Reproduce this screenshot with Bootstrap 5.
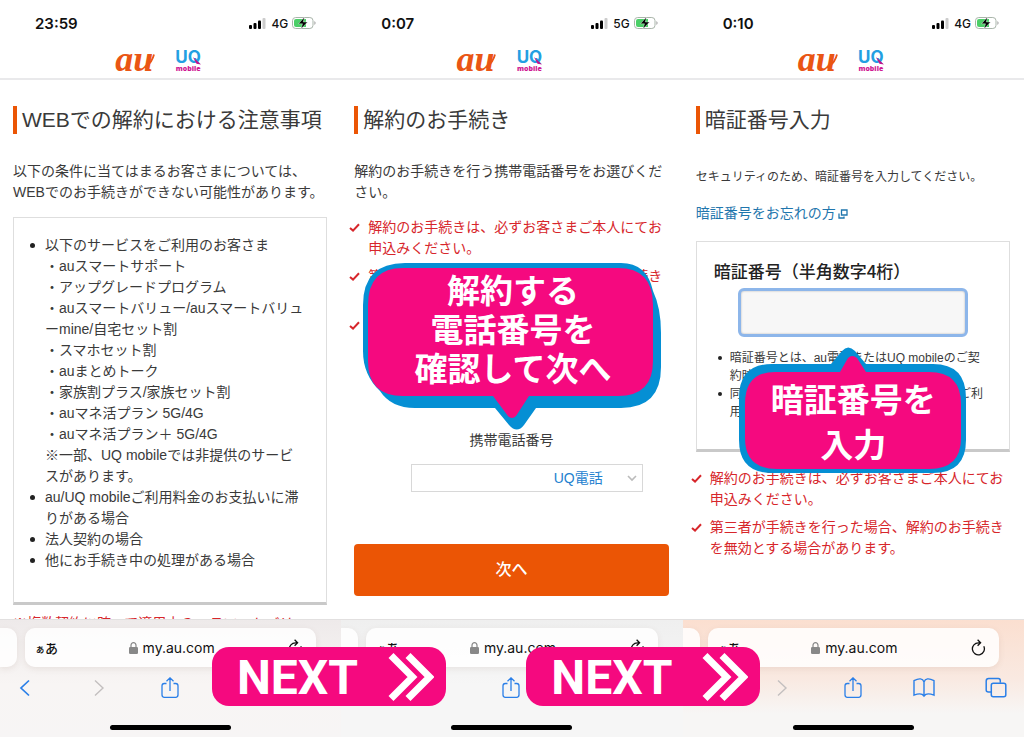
<!DOCTYPE html>
<html lang="ja">
<head>
<meta charset="utf-8">
<meta name="viewport" content="width=device-width, initial-scale=1">
<title>解約のお手続き</title>
<link href="https://cdn.jsdelivr.net/npm/bootstrap@5.3.0/dist/css/bootstrap.min.css" rel="stylesheet">
<style>
:root{--au:#eb5505;--pink:#f5097f;--sky:#058fd4;--alert:#d7262b;--ios:#2a7fe8}
body{font-family:"Liberation Sans","Noto Sans CJK JP",sans-serif;font-size:14px;line-height:21px;color:#3a3a3a;background:#fff}
p,ul,h1{margin:0}
.phone{overflow:hidden}
.status{height:46px;padding:0 25px 0 35px;font-family:Inter,sans-serif;color:#111}
.status time{font-size:15px;font-weight:600}
.status .short{padding-left:5px}
.status .net{font-size:12px;font-weight:500}
.brand{height:34px;padding:0 25px 2px 0;gap:20px;border-bottom:2px solid #e9e9eb}
.logo-au{position:relative;width:40px;height:28px;font:italic 700 36px/24px "Liberation Serif",serif;color:#ea5514}
.logo-au svg{position:absolute;right:0;top:6px}
.logo-uq{position:relative;width:26px;height:24px;font:700 17px/16px Inter,sans-serif;color:#239fe2;text-align:center}
.logo-uq svg{position:absolute;right:0;top:8px}
.logo-uq span{display:block;font:800 7px/7px "Open Sans",sans-serif;color:#cf1a93}
.view{flex:1 1 0;min-height:0;overflow:hidden;padding:26px 14px 0 13px}
.heading{border-left:4px solid var(--au);padding-left:5px;font-size:21px;line-height:28px;font-weight:400;color:#3a3a3a;white-space:nowrap}
.intro{margin-top:27px}
.panel{border:1px solid #dedede;border-bottom:3px solid #c9c9c9}
.panel ul{list-style:none;padding:0}
.panel li{position:relative}
.panel li::before{content:"";position:absolute;left:-15px;top:8px;width:5px;height:5px;border-radius:50%;background:#222}
.panel .small-text li::before{left:-12px;top:7px;width:4px;height:4px}
.conditions{margin-top:14px;padding:17px 21px 31px 31px;line-break:anywhere}
.alert-text{color:var(--alert)}
.checks{list-style:none;padding:0;margin-left:-5px}
.checks li{display:flex;gap:8px;margin-bottom:7px}
.checks svg{flex:none;margin-top:6px}
.checks .tall{height:108px}
.number-select{width:auto;margin:13px 26px 0 57px;height:28px;padding:0 39px 0 8px;border:1px solid #d8d8d8;border-radius:0;font-size:14px;line-height:21px;color:#2381cf;text-align-last:right;background-position:right 5px center;background-size:10px 10px;background-image:url("data:image/svg+xml,%3Csvg xmlns='http://www.w3.org/2000/svg' viewBox='0 0 10 10'%3E%3Cpath d='M1 3l4 4 4-4' fill='none' stroke='%23bbb' stroke-width='1.6'/%3E%3C/svg%3E")}
.go{height:52px;margin-top:52px;background:var(--au);border:0;border-radius:4px;color:#fff;font-size:16px;font-weight:500}
.go:hover{background:#d14b04;color:#fff}
.small-text{font-size:12px;line-height:18px}
.pin-panel{margin-top:17px;padding:15px 17px 28px}
.pin-panel label{display:block;font-family:"Noto Sans CJK JP",sans-serif;font-size:17px;line-height:27px;font-weight:500;color:#222}
.pin-input{height:49px;border:3px solid #8db6ea;border-radius:6px;background:#f7f7f7;box-shadow:inset 0 0 2px #aaa}
.pin-input:focus{border-color:#8db6ea;background:#f7f7f7}
.bubble{position:absolute;left:50%;transform:translateX(-50%);color:#fff;font-family:"Noto Sans CJK JP",sans-serif;font-weight:700;font-size:33px;text-align:center;white-space:nowrap}
.bubble svg{position:absolute;left:0;top:0}
.bubble p{position:relative}
.b-phone{top:263px;width:298px;height:168px;line-height:39px;padding:7px 0 0 2px}
.b-pin{top:346px;width:228px;height:128px;line-height:45px;padding-top:30px}
.safari{height:118px;border-top:1px solid #e2e0e0;padding-top:8px;background:linear-gradient(#eeeaea,#f8f5f4 55%,#f7f5f5)}
.safari.plain{background:linear-gradient(#efefef,#f6f6f6 55%,#f6f6f6)}
.safari.warm{background:linear-gradient(#fbdfd0,#f9e9e1 50%,#f7f6f5 80%)}
.pill{height:39px;border-radius:10px;background:rgba(255,255,255,.85);box-shadow:0 2px 6px rgba(120,80,60,.1)}
.pill.prev{width:17px;border-radius:0 10px 10px 0}
.pill.address{margin:0 25px 0 8px;padding:0 13px 0 10px;font-family:Inter,sans-serif;font-size:14px;color:#111}
.aa{font:500 10px "Noto Sans CJK JP",sans-serif}
.aa span{font-size:13px}
.site{gap:5px;padding-right:3px}
.tools{padding:0 17px 0 14px;margin-top:10px;height:22px}
.tools button,.pill button{border:0;padding:0;background:none;line-height:0;color:var(--ios)}
.tools button:disabled{color:#c3bfbf}
.pill button{color:#111}
.home{width:121px;height:5px;border-radius:3px;background:#000;margin:26px auto 0}
.next-tag{position:absolute;bottom:31px;width:234px;height:59px;border-radius:17px;background:var(--pink);color:#fff;font:700 48px/59px Roboto,sans-serif;padding:1px 12px 0 25px}
.after-first{left:20.7%}
.after-second{left:51.4%}
</style>
</head>
<body>
<svg width="0" height="0" class="position-absolute" aria-hidden="true">
  <symbol id="cell" viewBox="0 0 18 11"><rect y="7" width="3" height="4" rx="1"/><rect x="4.5" y="5" width="3" height="6" rx="1"/><rect x="9" y="2.500" width="3" height="8.500" rx="1"/><rect x="13.500" width="3" height="11" rx="1" fill="#ccc"/></symbol>
  <symbol id="battery" viewBox="0 0 24 14"><rect x=".5" y="1.500" width="20.500" height="11" rx="3.200" fill="#fff" stroke="#a9b5aa"/><path d="M4 3h10v8H4a2 2 0 0 1-2-2V5a2 2 0 0 1 2-2z" fill="#4bcf67"/><path d="M22.300 5v4q1.400-.8 1.400-2t-1.400-2z" fill="#aaa"/><path d="M12.500 1L6.500 7.800h4L9 13l6.500-7h-4.200z" stroke="#fff" stroke-width=".4"/></symbol>
  <symbol id="au-tail" viewBox="0 0 8 14"><path d="M0 12.500Q5 9 7 1.500" fill="none" stroke="#ea5514" stroke-width="1.800"/></symbol>
  <symbol id="uq-tail" viewBox="0 0 8 8"><path d="M0 0l8 7.500-4.500-.8z" fill="#c3128c"/></symbol>
  <symbol id="tick" viewBox="0 0 11 9"><path d="M1 5l3 2.600L10 1.200" fill="none" stroke="#d7262b" stroke-width="2"/></symbol>
  <symbol id="lock" viewBox="0 0 9 12"><rect y="5" width="9" height="7" rx="1.300"/><path d="M2 5.500V3.200a2.500 2.500 0 0 1 5 0v2.300" fill="none" stroke="currentColor" stroke-width="1.200"/></symbol>
  <symbol id="reload" viewBox="0 0 15 17"><path d="M12.800 7.200A6 6 0 1 1 7.500 3.800H9M6.600.8L9.600 3.800 6.600 6.800" fill="none" stroke="currentColor" stroke-width="1.300"/></symbol>
  <symbol id="back" viewBox="0 0 22 22"><path d="M15 3.500L7 11l8 7.500" fill="none" stroke="currentColor" stroke-width="1.700"/></symbol>
  <symbol id="fwd" viewBox="0 0 22 22"><path d="M9 3.500L17 11l-8 7.500" fill="none" stroke="currentColor" stroke-width="1.400"/></symbol>
  <symbol id="share" viewBox="0 0 22 22"><path d="M8.500 6.500H6.300Q4 6.500 4 8.800v9Q4 20.300 6.300 20.300h11.400q2.300 0 2.300-2.500v-9q0-2.300-2.300-2.300h-2.200M12 14V1M8.500 4.300L12 .9l3.500 3.400" fill="none" stroke="currentColor" stroke-width="1.300"/></symbol>
  <symbol id="book" viewBox="0 0 22 22"><path d="M11 5v14M11 5Q9-.5 1 3.600v14.600q7.500-3 10 .8 2.500-3.800 10-.8V3.600Q13-.5 11 5z" fill="none" stroke="currentColor" stroke-width="1.400"/></symbol>
  <symbol id="tabs" viewBox="0 0 22 22"><rect x="6.300" y="6.300" width="14.500" height="13.500" rx="2" fill="none" stroke="currentColor" stroke-width="1.500"/><path d="M6 15H3.500Q1.200 15 1.200 13V4q0-2.500 2.500-2.500h9.600q2 0 2 2.300v2" fill="none" stroke="currentColor" stroke-width="1.500"/></symbol>
  <symbol id="chev" viewBox="0 0 46 48"><path d="M3 2.500l21.500 21.500L3 45.500M20 2.500l21.500 21.500-21.500 21.500" fill="none" stroke="#fff" stroke-width="7"/></symbol>
</svg>

<div class="position-relative overflow-hidden">
<div class="row g-0 min-vh-100">

  <section class="phone col-4 d-flex flex-column min-vh-100 position-relative">
    <div class="status d-flex align-items-center justify-content-between"><time>23:59</time>
      <span class="d-flex align-items-center"><svg width="18" height="11"><use href="#cell"/></svg><span class="net mx-1">4G</span><svg width="24" height="14"><use href="#battery"/></svg></span></div>
    <header class="brand d-flex justify-content-center align-items-center"><span class="logo-au">au<svg width="8" height="14" aria-hidden="true"><use href="#au-tail"/></svg></span><span class="logo-uq">UQ<span>mobile</span><svg width="8" height="8" aria-hidden="true"><use href="#uq-tail"/></svg></span></header>
    <main class="view">
      <h1 class="heading">WEBでの解約における注意事項</h1>
      <p class="intro">以下の条件に当てはまるお客さまについては、<br>WEBでのお手続きができない可能性があります。</p>
      <div class="panel conditions">
        <ul>
          <li>以下のサービスをご利用のお客さま<br>・auスマートサポート<br>・アップグレードプログラム<br>・auスマートバリュー/auスマートバリューmine/自宅セット割<br>・スマホセット割<br>・auまとめトーク<br>・家族割プラス/家族セット割<br>・auマネ活プラン 5G/4G<br>・auマネ活プラン＋ 5G/4G<br>※一部、UQ mobileでは非提供のサービスがあります。</li>
          <li>au/UQ mobileご利用料金のお支払いに滞りがある場合</li>
          <li>法人契約の場合</li>
          <li>他にお手続き中の処理がある場合</li>
        </ul>
      </div>
      <p class="alert-text mt-2">※複数契約に跨って適用中のauスマートバリ</p>
    </main>
    <footer class="safari">
      <div class="d-flex"><div class="pill prev"></div>
        <div class="pill address flex-fill d-flex align-items-center justify-content-between"><span class="aa">ぁ<span>あ</span></span><span class="site d-flex align-items-center"><svg width="9" height="12" color="#888" fill="#888"><use href="#lock"/></svg>my.au.com</span><button type="button" aria-label="再読み込み"><svg width="15" height="17"><use href="#reload"/></svg></button></div></div>
      <div class="tools d-flex justify-content-between">
        <button type="button" aria-label="戻る"><svg width="22" height="22"><use href="#back"/></svg></button><button type="button" disabled aria-label="進む"><svg width="22" height="22"><use href="#fwd"/></svg></button><button type="button" aria-label="共有"><svg width="22" height="22"><use href="#share"/></svg></button><button type="button" aria-label="ブックマーク"><svg width="22" height="22"><use href="#book"/></svg></button><button type="button" aria-label="タブ"><svg width="22" height="22"><use href="#tabs"/></svg></button></div>
      <div class="home"></div>
    </footer>
  </section>

  <section class="phone col-4 d-flex flex-column min-vh-100 position-relative">
    <div class="status d-flex align-items-center justify-content-between"><time class="short">0:07</time>
      <span class="d-flex align-items-center"><svg width="18" height="11"><use href="#cell"/></svg><span class="net mx-1">5G</span><svg width="24" height="14"><use href="#battery"/></svg></span></div>
    <header class="brand d-flex justify-content-center align-items-center"><span class="logo-au">au<svg width="8" height="14" aria-hidden="true"><use href="#au-tail"/></svg></span><span class="logo-uq">UQ<span>mobile</span><svg width="8" height="8" aria-hidden="true"><use href="#uq-tail"/></svg></span></header>
    <main class="view">
      <h1 class="heading">解約のお手続き</h1>
      <p class="intro">解約のお手続きを行う携帯電話番号をお選びください。</p>
      <ul class="checks alert-text" style="margin-top:14px">
        <li><svg width="11" height="9"><use href="#tick"/></svg><span>解約のお手続きは、必ずお客さまご本人にてお申込みください。</span></li>
        <li><svg width="11" height="9"><use href="#tick"/></svg><span>第三者が手続きを行った場合、解約のお手続きを無効とする場合があります。</span></li>
        <li class="tall"><svg width="11" height="9"><use href="#tick"/></svg></li>
      </ul>
      <label for="tel" class="d-block text-center">携帯電話番号</label>
      <div class="d-grid"><select id="tel" class="form-select number-select"><option>UQ電話</option></select></div>
      <button type="button" class="btn go w-100">次へ</button>
    </main>
    <div class="bubble b-phone">
      <svg width="298" height="168" aria-hidden="true"><path d="M42 0H258Q284 0 290 28Q298 45 298 70V104Q298 145 258 145H173L161 162Q154 171 146 162L132 145H52Q28 145 17 128Q0 112 0 88V42Q0 0 42 0z" fill="#058fd4"/><path d="M40 5H255Q290 5 290 42V98Q290 133 255 133H166L153 153Q149 157 145 153L130 133H40Q5 133 5 98V42Q5 5 40 5z" fill="#f5097f"/></svg>
      <p>解約する<br>電話番号を<br>確認して次へ</p>
    </div>
    <footer class="safari plain">
      <div class="d-flex"><div class="pill prev"></div>
        <div class="pill address flex-fill d-flex align-items-center justify-content-between"><span class="aa">ぁ<span>あ</span></span><span class="site d-flex align-items-center"><svg width="9" height="12" color="#888" fill="#888"><use href="#lock"/></svg>my.au.com</span><button type="button" aria-label="再読み込み"><svg width="15" height="17"><use href="#reload"/></svg></button></div></div>
      <div class="tools d-flex justify-content-between">
        <button type="button" aria-label="戻る"><svg width="22" height="22"><use href="#back"/></svg></button><button type="button" disabled aria-label="進む"><svg width="22" height="22"><use href="#fwd"/></svg></button><button type="button" aria-label="共有"><svg width="22" height="22"><use href="#share"/></svg></button><button type="button" aria-label="ブックマーク"><svg width="22" height="22"><use href="#book"/></svg></button><button type="button" aria-label="タブ"><svg width="22" height="22"><use href="#tabs"/></svg></button></div>
      <div class="home"></div>
    </footer>
  </section>

  <section class="phone col-4 d-flex flex-column min-vh-100 position-relative">
    <div class="status d-flex align-items-center justify-content-between"><time class="short">0:10</time>
      <span class="d-flex align-items-center"><svg width="18" height="11"><use href="#cell"/></svg><span class="net mx-1">4G</span><svg width="24" height="14"><use href="#battery"/></svg></span></div>
    <header class="brand d-flex justify-content-center align-items-center"><span class="logo-au">au<svg width="8" height="14" aria-hidden="true"><use href="#au-tail"/></svg></span><span class="logo-uq">UQ<span>mobile</span><svg width="8" height="8" aria-hidden="true"><use href="#uq-tail"/></svg></span></header>
    <main class="view">
      <h1 class="heading">暗証番号入力</h1>
      <p class="small-text" style="margin-top:34px">セキュリティのため、暗証番号を入力してください。</p>
      <p style="margin-top:17px"><a href="#" class="text-decoration-none" style="color:#1f76ad">暗証番号をお忘れの方<svg width="10" height="10" viewBox="0 0 10 10" style="margin-left:2px" fill="none" stroke="currentColor" stroke-width="1.300" aria-hidden="true"><path d="M3.500 1h5.500v5H3.500zM1 4.500V9h5V7.500"/></svg></a></p>
      <div class="panel pin-panel">
        <label for="pin">暗証番号（半角数字4桁）</label>
        <div class="px-4 pt-1"><input id="pin" type="password" inputmode="numeric" maxlength="4" class="form-control pin-input"></div>
        <ul class="small-text ps-3 text-nowrap" style="margin-top:12px">
          <li>暗証番号とは、au電話またはUQ mobileのご契<br>約時にお申込書へ記入した4桁の番号です。</li>
          <li>同一の暗証番号は、auの各種サービスでもご利<br>用いただけます。</li>
        </ul>
      </div>
      <ul class="checks alert-text mt-3">
        <li><svg width="11" height="9"><use href="#tick"/></svg><span>解約のお手続きは、必ずお客さまご本人にてお申込みください。</span></li>
        <li><svg width="11" height="9"><use href="#tick"/></svg><span>第三者が手続きを行った場合、解約のお手続きを無効とする場合があります。</span></li>
      </ul>
    </main>
    <div class="bubble b-pin">
      <svg width="228" height="128" aria-hidden="true"><path d="M33 18H92L103 5Q109-2 116 5L127 18H194Q227 18 227 52V94Q227 127 194 127H33Q0 127 0 94V52Q0 18 33 18z" fill="#058fd4"/><path d="M36 26H101L109 12Q113 8 118 12L127 26H190Q222 26 222 58V92Q222 123 190 123H38Q6 123 6 92V58Q6 26 36 26z" fill="#f5097f"/></svg>
      <p>暗証番号を<br>入力</p>
    </div>
    <footer class="safari warm">
      <div class="d-flex"><div class="pill prev"></div>
        <div class="pill address flex-fill d-flex align-items-center justify-content-between"><span class="aa">ぁ<span>あ</span></span><span class="site d-flex align-items-center"><svg width="9" height="12" color="#888" fill="#888"><use href="#lock"/></svg>my.au.com</span><button type="button" aria-label="再読み込み"><svg width="15" height="17"><use href="#reload"/></svg></button></div></div>
      <div class="tools d-flex justify-content-between">
        <button type="button" aria-label="戻る"><svg width="22" height="22"><use href="#back"/></svg></button><button type="button" disabled aria-label="進む"><svg width="22" height="22"><use href="#fwd"/></svg></button><button type="button" aria-label="共有"><svg width="22" height="22"><use href="#share"/></svg></button><button type="button" aria-label="ブックマーク"><svg width="22" height="22"><use href="#book"/></svg></button><button type="button" aria-label="タブ"><svg width="22" height="22"><use href="#tabs"/></svg></button></div>
      <div class="home"></div>
    </footer>
  </section>
</div>

<div class="next-tag after-first d-flex align-items-center justify-content-between">NEXT<svg width="46" height="48" aria-hidden="true"><use href="#chev"/></svg></div>
<div class="next-tag after-second d-flex align-items-center justify-content-between">NEXT<svg width="46" height="48" aria-hidden="true"><use href="#chev"/></svg></div>
</div>
<script src="https://cdn.jsdelivr.net/npm/bootstrap@5.3.0/dist/js/bootstrap.bundle.min.js"></script>
</body>
</html>
